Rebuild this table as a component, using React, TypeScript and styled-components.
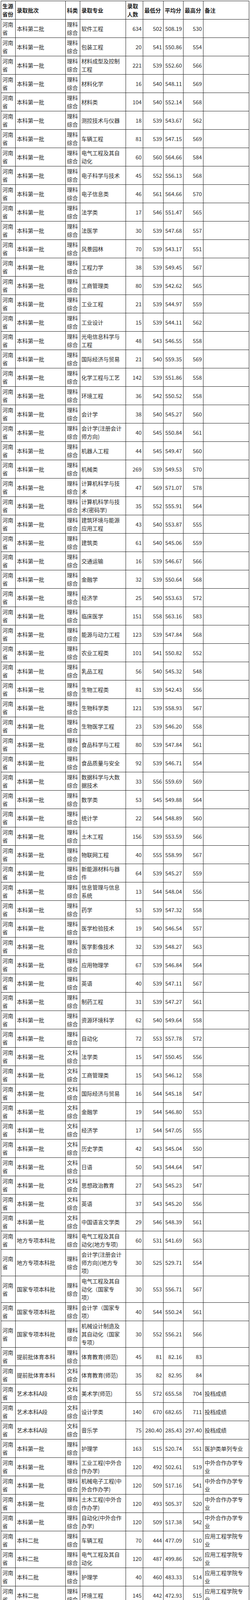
import React from "react";
import styled, { createGlobalStyle } from "styled-components";

const GlobalStyle = createGlobalStyle`
  html, body {
    margin: 0;
    padding: 0;
    background: #ffffff;
  }
  body {
    font-family: "Noto Sans CJK SC", "Noto Sans", sans-serif;
    color: #222222;
  }
`;

const Page = styled.div`
  padding: 2px 0 0 2px;
`;

const Table = styled.table`
  width: 634px;
  table-layout: fixed;
  border-collapse: collapse;
  font-size: 14px;
  line-height: 21px;
  text-spacing-trim: space-all;
`;

const Th = styled.th`
  border: 1px solid #1a1a1a;
  padding: 2px 3px;
  text-align: left;
  vertical-align: middle;
  font-weight: 700;
  color: #1e1e1e;
`;

const Td = styled.td<{ $align?: "left" | "right" }>`
  border: 1px solid #1a1a1a;
  padding: 2px 3px;
  text-align: ${(p) => p.$align ?? "left"};
  vertical-align: middle;
  font-weight: 400;
  color: #2a2a2a;
  white-space: ${(p) => (p.$align === "right" ? "nowrap" : "normal")};
`;

const widths = [37, 128, 37, 117, 44, 52, 51, 51, 117];

type Row = [string, string, string, string, string, string, string, string?];

const LK = "理科综合";
const WK = "文科综合";
const B1 = "本科第一批";
const B2 = "本科二批";
const YY = "应用工程学院专业";
const ZW = "中外合作办学专业";
const LB = "与河南工业职业技术学院联办本科专业";
const NL = "农林类专业";
const MD = "莫动理工学院（中外合作办学专业）";

const rows: Row[] = [
  ["本科第二批", LK, "软件工程", "634", "502", "508.19", "530"],
  [B1, LK, "包装工程", "20", "541", "550.86", "554"],
  [B1, LK, "材料成型及控制工程", "221", "539", "552.60", "566"],
  [B1, LK, "材料化学", "16", "540", "548.11", "569"],
  [B1, LK, "材料类", "104", "540", "552.14", "568"],
  [B1, LK, "测控技术与仪器", "18", "539", "543.67", "562"],
  [B1, LK, "车辆工程", "81", "539", "547.15", "569"],
  [B1, LK, "电气工程及其自动化", "60", "560", "564.66", "584"],
  [B1, LK, "电子科学与技术", "45", "552", "556.13", "568"],
  [B1, LK, "电子信息类", "46", "561", "564.66", "570"],
  [B1, LK, "法学类", "17", "546", "551.47", "565"],
  [B1, LK, "法医学", "30", "539", "547.68", "557"],
  [B1, LK, "风景园林", "70", "539", "543.17", "551"],
  [B1, LK, "工程力学", "38", "539", "549.45", "567"],
  [B1, LK, "工商管理类", "80", "539", "542.62", "565"],
  [B1, LK, "工业工程", "21", "539", "544.97", "559"],
  [B1, LK, "工业设计", "15", "539", "544.11", "562"],
  [B1, LK, "光电信息科学与工程", "48", "543", "546.55", "558"],
  [B1, LK, "国际经济与贸易", "21", "540", "559.35", "569"],
  [B1, LK, "化学工程与工艺", "142", "539", "551.86", "558"],
  [B1, LK, "环境工程", "36", "542", "550.52", "558"],
  [B1, LK, "会计学", "38", "540", "545.27", "560"],
  [B1, LK, "会计学(注册会计师方向)", "40", "545", "550.84", "561"],
  [B1, LK, "机器人工程", "44", "545", "549.47", "560"],
  [B1, LK, "机械类", "269", "539", "549.53", "570"],
  [B1, LK, "计算机科学与技术", "47", "569", "571.07", "578"],
  [B1, LK, "计算机科学与技术(密码学)", "35", "552", "555.91", "564"],
  [B1, LK, "建筑环境与能源应用工程", "43", "540", "553.87", "555"],
  [B1, LK, "建筑类", "61", "540", "545.06", "559"],
  [B1, LK, "交通运输", "16", "539", "546.67", "566"],
  [B1, LK, "金融学", "32", "539", "550.64", "568"],
  [B1, LK, "经济学", "25", "540", "553.63", "572"],
  [B1, LK, "临床医学", "151", "558", "563.16", "583"],
  [B1, LK, "能源与动力工程", "123", "539", "547.84", "568"],
  [B1, LK, "农业工程类", "101", "541", "550.82", "552"],
  [B1, LK, "乳品工程", "56", "540", "545.32", "548"],
  [B1, LK, "生物工程类", "81", "539", "542.43", "556"],
  [B1, LK, "生物科学类", "121", "539", "558.93", "567"],
  [B1, LK, "生物医学工程", "23", "539", "546.20", "558"],
  [B1, LK, "食品科学与工程", "80", "539", "547.84", "561"],
  [B1, LK, "食品质量与安全", "92", "539", "546.71", "554"],
  [B1, LK, "数据科学与大数据技术", "33", "556", "559.69", "569"],
  [B1, LK, "数学类", "53", "545", "549.88", "564"],
  [B1, LK, "统计学", "22", "544", "548.89", "560"],
  [B1, LK, "土木工程", "156", "539", "553.59", "566"],
  [B1, LK, "物联网工程", "40", "555", "558.99", "567"],
  [B1, LK, "新能源材料与器件", "64", "539", "545.27", "559"],
  [B1, LK, "信息管理与信息系统", "13", "544", "548.04", "556"],
  [B1, LK, "药学", "53", "539", "547.32", "558"],
  [B1, LK, "医学检验技术", "19", "540", "546.54", "557"],
  [B1, LK, "医学影像技术", "32", "539", "548.27", "563"],
  [B1, LK, "应用物理学", "67", "539", "546.84", "564"],
  [B1, LK, "英语", "40", "539", "547.11", "567"],
  [B1, LK, "制药工程", "31", "539", "547.27", "561"],
  [B1, LK, "资源环境科学", "62", "540", "549.64", "558"],
  [B1, LK, "自动化", "72", "553", "557.78", "572"],
  [B1, WK, "法学类", "15", "547", "550.45", "556"],
  [B1, WK, "工商管理类", "15", "543", "546.12", "558"],
  [B1, WK, "国际经济与贸易", "16", "544", "545.18", "547"],
  [B1, WK, "金融学", "19", "544", "546.80", "553"],
  [B1, WK, "经济学", "17", "544", "547.05", "555"],
  [B1, WK, "历史学类", "42", "543", "545.04", "550"],
  [B1, WK, "日语", "50", "543", "544.64", "547"],
  [B1, WK, "思想政治教育", "27", "543", "545.23", "547"],
  [B1, WK, "英语", "37", "543", "545.20", "556"],
  [B1, WK, "中国语言文学类", "29", "546", "548.39", "561"],
  ["地方专项本科批", LK, "电气工程及其自动化(地方专项)", "60", "531", "541.69", "563"],
  ["地方专项本科批", LK, "会计学(注册会计师方向)(地方专项)", "30", "525", "529.71", "554"],
  ["国家专项本科批", LK, "电气工程及其自动化（国家专项）", "30", "553", "556.71", "567"],
  ["国家专项本科批", LK, "会计学（国家专项）", "40", "544", "550.24", "561"],
  ["国家专项本科批", LK, "机械设计制造及其自动化（国家专项）", "30", "552", "556.21", "566"],
  ["提前批体育本科", LK, "体育教育(师范)", "45", "81", "82.16", "83"],
  ["提前批体育本科", WK, "体育教育(师范)", "35", "82", "82.95", "84"],
  ["艺术本科A段", WK, "美术学(师范)", "55", "572", "655.58", "704", "投档成绩"],
  ["艺术本科A段", WK, "设计学类", "140", "670", "682.65", "711", "投档成绩"],
  ["艺术本科A段", WK, "音乐学", "75", "280.40", "285.43", "297.40", "投档成绩"],
  [B1, LK, "护理学", "163", "515", "520.74", "551", "医护类单列专业"],
  [B1, LK, "工业工程(中外合作办学)", "120", "492", "502.61", "519", ZW],
  [B1, LK, "机械电子工程(中外合作办学)", "120", "509", "517.16", "541", ZW],
  [B1, LK, "土木工程(中外合作办学)", "120", "493", "505.37", "520", ZW],
  [B1, LK, "自动化(中外合作办学)", "120", "509", "517.38", "542", ZW],
  [B2, LK, "车辆工程", "70", "444", "477.09", "510", YY],
  [B2, LK, "电气工程及其自动化", "120", "487", "499.86", "526", YY],
  [B2, LK, "护理学", "40", "460", "483.33", "514", YY],
  [B2, LK, "环境工程", "145", "442", "472.93", "515", YY],
  [B2, LK, "会计学", "125", "442", "478.16", "518", YY],
  [B2, LK, "机器人工程", "105", "446", "476.37", "505", YY],
  [B2, LK, "机械设计制造及其自动化", "105", "482", "497.27", "527", YY],
  [B2, LK, "计算机科学与技术", "90", "500", "507.49", "527", YY],
  [B2, LK, "金属材料工程", "105", "442", "473.34", "500", YY],
  [B2, LK, "经济学", "85", "442", "472.60", "511", YY],
  [B2, LK, "临床医学", "45", "518", "525.73", "542", YY],
  [B2, LK, "软件工程", "605", "440", "467.14", "509", YY],
  [B2, LK, "食品质量与安全", "115", "442", "467.62", "507", YY],
  [B2, LK, "市场营销", "85", "442", "463.51", "496", YY],
  [B2, LK, "土木工程", "75", "463", "474.77", "512", YY],
  [B2, LK, "园艺", "105", "416", "438.06", "504", YY],
  [B2, WK, "汉语言文学", "125", "504", "511.10", "527", YY],
  [B2, WK, "经济学", "85", "491", "507.52", "529", YY],
  [B2, WK, "市场营销", "85", "469", "484.64", "517", YY],
  [B2, WK, "英语", "185", "469", "490.22", "526", YY],
  [B2, LK, "电气工程及其自动化", "30", "495", "501.64", "516", LB],
  [B2, LK, "会计学", "30", "494", "497.14", "509", LB],
  [B2, LK, "机械设计制造及其自动化", "30", "494", "500.91", "510", LB],
  [B2, LK, "计算机科学与技术", "30", "496", "501.84", "512", LB],
  ["本科一批", "理工类", "动物科学", "70", "511", "515.32", "537", NL],
  ["本科一批", "理工类", "动物医学类", "211", "513", "516.58", "542", NL],
  ["本科一批", "理工类", "林学", "70", "511", "515.24", "538", NL],
  ["本科一批", "理工类", "水族科学与技术", "30", "511", "514.81", "529", NL],
  ["本科一批", "理工类", "园艺", "76", "512", "516.62", "535", NL],
  ["本科一批", "理工类", "植物保护", "70", "511", "513.91", "527", NL],
  ["本科一批", "理工类", "植物生产类", "149", "511", "515.62", "539", NL],
  ["提前批其他本科（河南省免费医学定向生）", "理工", "临床医学(国家免费医学生)", "50", "517", "526.62", "551", "免费医学定向生"],
  [B1, LK, "材料成型及控制工程(中外合作办学)", "70", "493", "502.05", "531", MD],
  [B1, LK, "电气工程及其自动化(中外合作办学)", "70", "511", "518.08", "545", MD],
  [B1, LK, "生物医学工程(中外合作办学)", "70", "490", "500.51", "529", MD],
];

const headers = ["生源省份", "录取批次", "科类", "录取专业", "录取人数", "最低分", "平均分", "最高分", "备注"];

export default function App() {
  return (
    <>
      <GlobalStyle />
      <Page>
        <Table>
          <colgroup>
            {widths.map((w, i) => (
              <col key={i} style={{ width: `${w}px` }} />
            ))}
          </colgroup>
          <thead>
            <tr>
              {headers.map((h) => (
                <Th key={h}>{h}</Th>
              ))}
            </tr>
          </thead>
          <tbody>
            {rows.map((r, i) => (
              <tr key={i}>
                <Td>河南省</Td>
                <Td>{r[0]}</Td>
                <Td>{r[1]}</Td>
                <Td>{r[2]}</Td>
                <Td $align="right">{r[3]}</Td>
                <Td $align="right">{r[4]}</Td>
                <Td $align="right">{r[5]}</Td>
                <Td $align="right">{r[6]}</Td>
                <Td>{r[7] ?? ""}</Td>
              </tr>
            ))}
          </tbody>
        </Table>
      </Page>
    </>
  );
}
